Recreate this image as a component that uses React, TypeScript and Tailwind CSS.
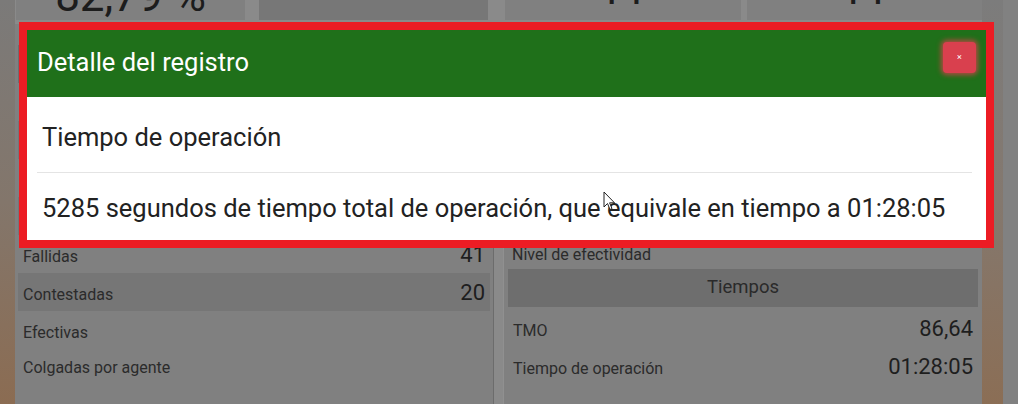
import React from "react";

const font = { fontFamily: "Roboto, 'Noto Sans', sans-serif" };

function Row({ label, value, shade, short, low }: { label: string; value?: string; shade?: boolean; short?: boolean; low?: boolean }) {
  return (
    <div
      className={`${short ? "h-[35px]" : "h-[38px]"} flex items-baseline justify-between px-[5px] ${low ? "pt-[9px]" : "pt-[7px]"} ${shade ? "bg-[#767676]" : ""}`}
    >
      <span className="text-[16px] text-[#2b2b2b]">{label}</span>
      <span className="text-[22px] leading-[26px] text-[#1e1e1e]">{value ?? "\u00a0"}</span>
    </div>
  );
}

function TopCard({ text, dark, lift }: { text: string; dark?: boolean; lift?: boolean }) {
  return (
    <div
      className={`h-[20px] flex-1 overflow-hidden flex items-end justify-center ${dark ? "bg-[#777777]" : "bg-[#808080]"} ${lift ? "pb-[9px]" : "pb-[2px]"}`}
    >
      <span className="text-[44px] leading-none text-[#1c1c1c] whitespace-nowrap">{text}</span>
    </div>
  );
}

export default function App() {
  return (
    <div className="relative w-[1018px] h-[404px] overflow-hidden flex" style={font}>
      <div className="w-[15px] h-full bg-gradient-to-b from-[#7b7a79] via-[#83766b] to-[#8b6c52]" />
      <div className="flex-1 h-full flex flex-col bg-[#8a8a8a]">
        <div className="grid grid-cols-2 gap-[9px] h-[22px]">
          <div className="flex gap-[14px] pl-[1px] pr-[6px] bg-[#8a8a8a]">
            <TopCard text="82,79 %" />
            <TopCard text="" dark />
          </div>
          <div className="flex gap-[6px] pl-[2px]">
            <TopCard text="11" lift />
            <TopCard text="11" lift />
          </div>
        </div>
        <div className="grid grid-cols-2 gap-[9px] flex-1 mt-[2px]">
          <div className="bg-[#808080] border-r border-[#6c6c6c] pt-[21px] px-[3px]">
            <div className="h-[38px] flex items-center justify-center bg-[#6e6e6e] text-[18.5px] text-[#2a2a2a]">Llamadas</div>
            <Row label="Total" value="61" />
            <Row label="Entrantes" value="0" shade />
            <Row label="Salientes" value="61" />
            <Row label="Abandonadas" value="0" shade />
            <Row label="Fallidas" value="41" />
            <Row label="Contestadas" value="20" shade />
            <Row label="Efectivas" short />
            <Row label="Colgadas por agente" />
          </div>
          <div className="bg-[#808080] border-l border-[#909090] pt-[17px] px-[4px]">
            <div className="h-[38px] flex items-center justify-center bg-[#6e6e6e] text-[18.5px] text-[#2a2a2a]">Resultados</div>
            <Row label="Ventas" value="0" />
            <Row label="No interesados" value="0" shade />
            <Row label="Volver a llamar" value="0" />
            <Row label="Otros" value="0" shade />
            <div className="h-[38px] flex items-end px-[4px] pb-[2px]">
              <span className="text-[16px] text-[#2b2b2b]">Nivel de efectividad</span>
            </div>
            <div className="h-[38px] flex items-center justify-center bg-[#6e6e6e] text-[18.5px] text-[#2a2a2a]">Tiempos</div>
            <Row label="TMO" value="86,64" low />
            <Row label="Tiempo de operación" value="01:28:05" low />
          </div>
        </div>
      </div>
      <div className="w-[21px] h-full bg-gradient-to-b from-[#7c7c7c] via-[#84786e] to-[#8b6e55]" />
      <div className="w-[15px] h-full bg-[#818181]" />

      {/* Modal */}
      <div className="absolute left-[19px] top-[22px] w-[975px] h-[226px] border-[8px] border-[#ec1c24] bg-white flex flex-col">
        <div className="h-[67px] shrink-0 bg-[#1f701a] flex items-start justify-between pl-[10px] pr-[10px]">
          <span className="text-[25.5px] text-white mt-[17px] leading-[30px]">Detalle del registro</span>
          <button className="mt-[12px] w-[33px] h-[31px] rounded-[4px] bg-[#d9404e] shadow-[0_0_5px_2px_rgba(230,60,80,0.75)] flex items-center justify-center text-white text-[9px] leading-none">
            ×
          </button>
        </div>
        <div className="flex-1 pl-[10px] pr-[14px] flex flex-col">
          <div className="h-[75px] shrink-0 flex items-center px-[5px] pt-[5px]">
            <span className="text-[25.5px] leading-[30px] text-[#222222]">Tiempo de operación</span>
          </div>
          <div className="h-px shrink-0 bg-[#e4e4e4]" />
          <div className="h-[67px] shrink-0 flex items-center px-[5px] pt-[2px]">
            <span className="text-[25.5px] leading-[30px] text-[#222222] whitespace-nowrap">
              5285 segundos de tiempo total de operación, que equivale en tiempo a 01:28:05
            </span>
          </div>
        </div>
      </div>

      {/* Mouse cursor */}
      <svg className="absolute left-[603px] top-[191px]" width="13" height="20" viewBox="0 0 13 20">
        <path d="M1 1 L1 16 L4.5 12.5 L7 18.5 L9 17.6 L6.6 11.8 L11.5 11.8 Z" fill="#ffffff" stroke="#222222" strokeWidth="1" strokeLinejoin="round" />
      </svg>
    </div>
  );
}
